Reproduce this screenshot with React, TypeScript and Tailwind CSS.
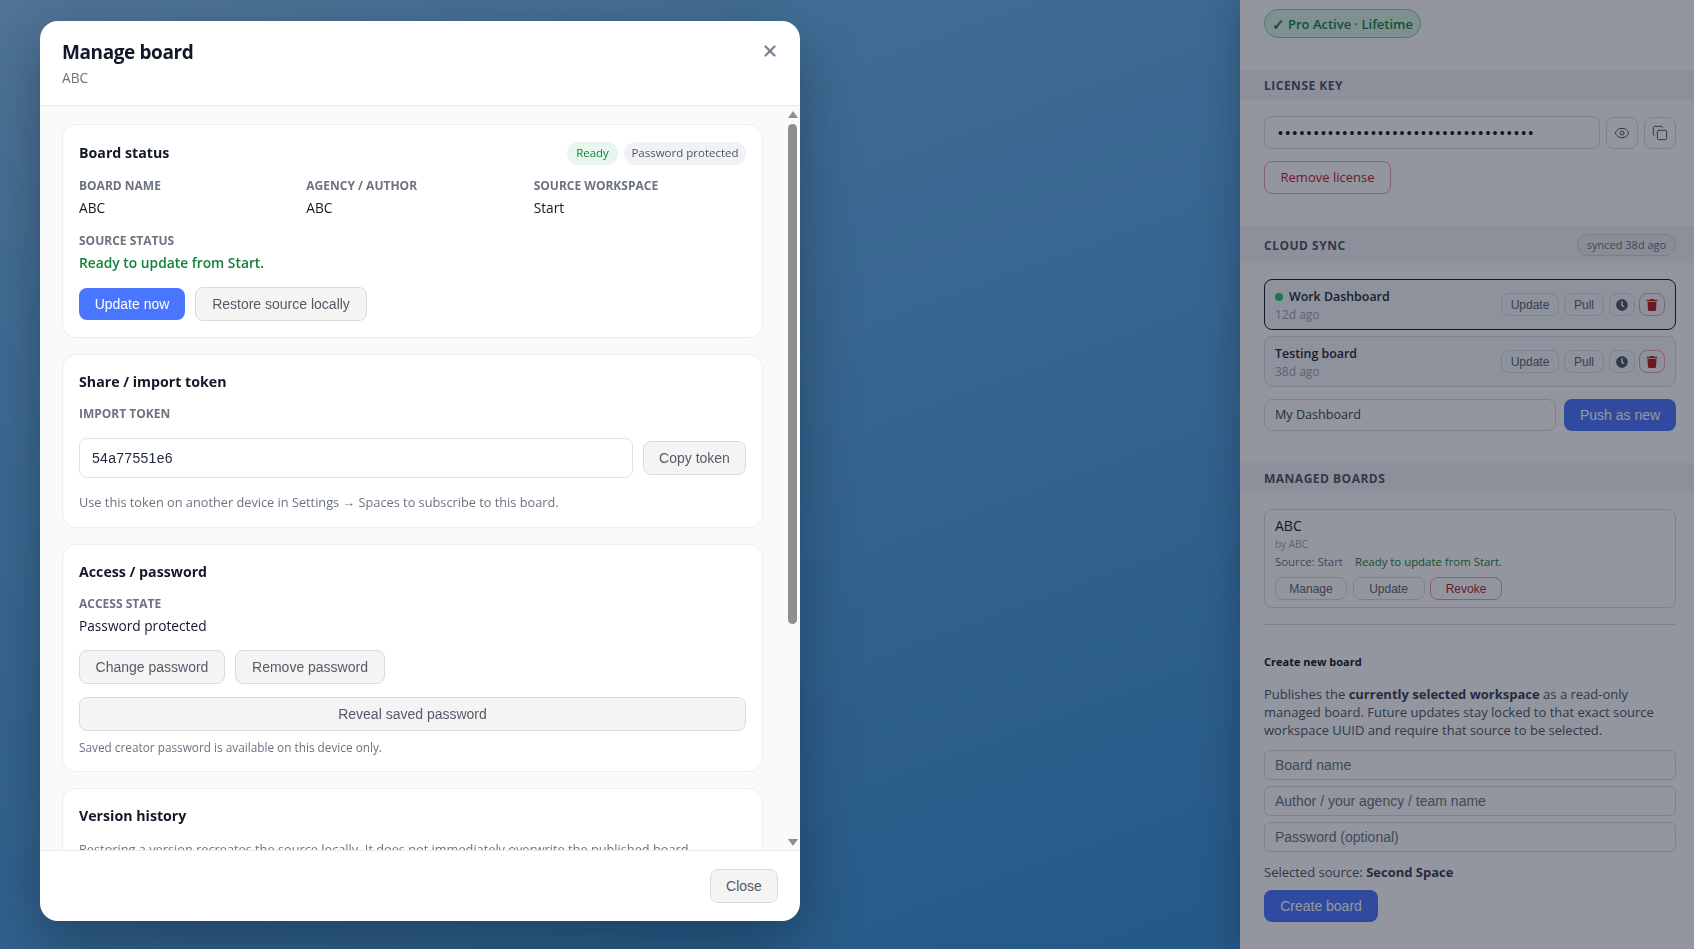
import { Copy, Eye, X } from 'lucide-react';
import { FaClock, FaTrash } from 'react-icons/fa';

const ui = "font-['Open_Sans','Noto_Sans',sans-serif]";
const btn =
  "inline-flex h-[34px] items-center justify-center rounded-lg border border-[#d9dbe0] bg-[#f4f4f5] font-['Liberation_Sans',sans-serif] text-sm whitespace-nowrap text-[#555b66]";
const miniBtn =
  "inline-flex h-[23px] items-center justify-center rounded-lg border border-[#d9dbe0] font-['Liberation_Sans',sans-serif] text-xs text-[#5b6472]";
const field =
  "h-[30px] w-full rounded-md border border-[#d9dbe0] bg-white px-[10px] font-['Liberation_Sans',sans-serif] text-sm leading-[28px] text-[#6b7280]";
const cardTitle = 'text-[14.2px] leading-6 font-bold text-[#111827]';
const value = 'text-[13.7px] leading-5 text-[#111827]';
const hint = 'text-[12.75px] leading-5 text-[#6b7280]';

function Label({ children }: { children: React.ReactNode }) {
  return <div className="text-xs leading-4 font-bold text-[#6b7280] uppercase">{children}</div>;
}

function Card({ className, children }: { className: string; children: React.ReactNode }) {
  return (
    <section className={`rounded-[14px] border border-[#eceef2] bg-white px-4 ${className}`}>{children}</section>
  );
}

function SectionBand({ title, right, className }: { title: string; right?: React.ReactNode; className: string }) {
  return (
    <div className={`flex items-center justify-between bg-[#f4f5f7] pr-[18px] pl-6 ${className}`}>
      <span className="pt-px text-xs font-bold tracking-[0.5px] text-[#4b5563] uppercase">{title}</span>
      {right}
    </div>
  );
}

function SyncRow({ name, ago, active }: { name: string; ago: string; active?: boolean }) {
  return (
    <div
      className={`flex h-[51px] items-center justify-between rounded-lg border bg-[#f6f7f9] pr-[10px] pl-[10px] ${
        active ? 'border-[#111827]' : 'border-[#d9dbe0]'
      }`}
    >
      <div className="pt-px">
        <div className="flex items-center gap-[6px] text-[12.4px] leading-[18px] font-semibold text-[#1f2937]">
          {active && <span className="size-2 rounded-full bg-[#22c55e]" />}
          {name}
        </div>
        <div className="pt-px text-xs leading-4 text-[#9ca3af]">{ago}</div>
      </div>
      <div className="flex items-center gap-[5px]">
        <button className={`${miniBtn} w-[58px]`}>Update</button>
        <button className={`${miniBtn} w-[40px]`}>Pull</button>
        <button className={`${miniBtn} -mr-px w-[26px]`}>
          <FaClock className="size-3 text-[#4b5563]" />
        </button>
        <button className={`${miniBtn} w-[26px] border-[#e8a3a8]`}>
          <FaTrash className="size-3 text-[#b91c1c]" />
        </button>
      </div>
    </div>
  );
}

function SidePanel() {
  return (
    <aside className={`ml-auto h-full w-[454px] overflow-hidden bg-white shadow-[-8px_0_32px_rgba(0,0,0,0.2)] ${ui}`}>
      <div className="pt-[9px] pl-6">
        <span className="inline-flex h-[29px] w-[157px] items-center justify-center gap-[3px] rounded-full border border-[#86c9a0] bg-[#dcf5e6] pt-[2px] text-[13px] font-semibold text-[#15803d]">
          <span className="text-[15px] leading-none">✓</span>
          <span>Pro Active · Lifetime</span>
        </span>
      </div>

      <SectionBand title="License key" className="mt-[32px] h-[30px]" />
      <div className="px-6 pt-4 pr-[18px]">
        <div className="flex items-center gap-[6px]">
          <div className="flex h-[33px] w-[336px] items-center rounded-lg border border-[#d9dbe0] pl-[13px] font-['Liberation_Sans',sans-serif] text-sm tracking-[2.25px] text-[#111827]">
            {'•'.repeat(36)}
          </div>
          <button className="flex size-8 items-center justify-center rounded-lg border border-[#d9dbe0] text-[#4b5563]">
            <Eye className="size-4" strokeWidth={1.5} />
          </button>
          <button className="flex size-8 items-center justify-center rounded-lg border border-[#d9dbe0] text-[#4b5563]">
            <Copy className="size-4" strokeWidth={1.5} />
          </button>
        </div>
        <button className="mt-3 h-[33px] w-[127px] rounded-lg border border-[#ef9ca3] text-[13px] text-[#b91c1c]">
          Remove license
        </button>
      </div>

      <SectionBand
        title="Cloud sync"
        className="mt-8 h-[37px] pt-px"
        right={
          <span className="flex h-[22px] w-[99px] items-center justify-center rounded-full border border-[#d1d5db] bg-[#eceef1] text-[11px] text-[#6b7280]">
            synced 38d ago
          </span>
        }
      />
      <div className="flex flex-col gap-[6px] pt-4 pr-[18px] pl-6">
        <SyncRow name="Work Dashboard" ago="12d ago" active />
        <SyncRow name="Testing board" ago="38d ago" />
        <div className="mt-[6px] flex gap-2">
          <div className="flex h-8 w-[292px] items-center rounded-lg border border-[#d9dbe0] pt-px pl-[10px] text-[12.6px] text-[#374151]">
            My Dashboard
          </div>
          <button className="h-8 w-[112px] rounded-lg bg-[#4a76ff] font-['Liberation_Sans',sans-serif] text-sm text-white">
            Push as new
          </button>
        </div>
      </div>

      <SectionBand title="Managed boards" className="mt-8 h-[30px]" />
      <div className="pt-4 pr-[18px] pl-6">
        <div className="h-[99px] rounded-lg border border-[#d9dbe0] pt-[6px] pl-[10px]">
          <div className="text-sm leading-5 font-medium text-[#111827]">ABC</div>
          <div className="text-[10px] leading-4 text-[#9ca3af]">by ABC</div>
          <div className="flex gap-3 pt-px text-[11.4px] leading-[17px]">
            <span className="text-[#6b7280]">Source: Start</span>
            <span className="text-[#15803d]">Ready to update from Start.</span>
          </div>
          <div className="mt-[7px] flex gap-[5.5px]">
            <button className={`${miniBtn} w-[72px] rounded-[9px]`}>Manage</button>
            <button className={`${miniBtn} w-[72px] rounded-[9px]`}>Update</button>
            <button className={`${miniBtn} w-[72px] rounded-[9px] border-[#ef9ca3] text-[#b91c1c]`}>Revoke</button>
          </div>
        </div>
        <div className="mt-4 h-px bg-[#d9dbe0]" />
        <h3 className="mt-[29px] text-[11px] leading-4 font-bold text-[#111827]">Create new board</h3>
        <p className="mt-[15px] w-[400px] text-[13px] leading-[18px] text-[#4b5563]">
          Publishes the <b className="font-bold text-[#374151]">currently selected workspace</b> as a read-only managed
          board. Future updates stay locked to that exact source workspace UUID and require that source to be selected.
        </p>
        <div className="mt-[11px] flex flex-col gap-[6px]">
          <div className={field}>Board name</div>
          <div className={field}>Author / your agency / team name</div>
          <div className={field}>Password (optional)</div>
        </div>
        <p className="mt-[11px] text-[13px] leading-[18px] text-[#4b5563]">
          Selected source: <b className="font-bold text-[#374151]">Second Space</b>
        </p>
        <button className="mt-[9px] h-8 w-[114px] rounded-lg bg-[#4a76ff] font-['Liberation_Sans',sans-serif] text-sm text-white">
          Create board
        </button>
      </div>
    </aside>
  );
}

function ManageBoardModal() {
  return (
    <div className={`absolute top-[21px] left-10 flex h-[900px] w-[760px] flex-col overflow-hidden rounded-[18px] bg-white shadow-[0_20px_60px_rgba(0,0,0,0.3)] ${ui}`}>
      <header className="relative h-[85px] shrink-0 border-b border-[#e8eaee] px-[22px] pt-[17px]">
        <h2 className="text-[19px] leading-7 font-bold tracking-[-0.4px] text-[#111827]">Manage board</h2>
        <p className="mt-[2px] text-[13.7px] leading-5 text-[#6b7280]">ABC</p>
        <X className="absolute top-[21px] right-[21px] size-[18px] text-[#7b8290]" strokeWidth={3} />
      </header>

      <div className="flex min-h-0 flex-1 bg-[#f9fafb]">
        <div className="flex min-w-0 flex-1 flex-col gap-4 overflow-hidden pt-[18px] pr-[22px] pl-[22px]">
          <Card className="h-[214px] shrink-0 pt-4">
            <div className="flex items-center justify-between">
              <h3 className={cardTitle}>Board status</h3>
              <div className="flex gap-[6px] text-[11.5px] font-medium">
                <span className="flex h-[23px] w-[51px] items-center justify-center rounded-full bg-[#e7f7ed] text-[#15803d]">
                  Ready
                </span>
                <span className="flex h-[23px] w-[122px] items-center justify-center rounded-full bg-[#f1f2f6] text-[#4b5563]">
                  Password protected
                </span>
              </div>
            </div>
            <div className="mt-[13px] grid grid-cols-3 gap-[15px]">
              <div>
                <Label>Board name</Label>
                <div className={`mt-[4px] ${value}`}>ABC</div>
              </div>
              <div>
                <Label>Agency / Author</Label>
                <div className={`mt-[4px] ${value}`}>ABC</div>
              </div>
              <div>
                <Label>Source workspace</Label>
                <div className={`mt-[4px] ${value}`}>Start</div>
              </div>
            </div>
            <div className="mt-[15px]">
              <Label>Source status</Label>
              <div className="mt-[4px] text-[13.8px] leading-5 font-semibold text-[#15803d]">Ready to update from Start.</div>
            </div>
            <div className="mt-[14px] flex items-center gap-[10px]">
              <button className="h-8 w-[106px] rounded-lg bg-[#4a76ff] font-['Liberation_Sans',sans-serif] text-sm text-white">
                Update now
              </button>
              <button className={`${btn} w-[172px]`}>Restore source locally</button>
            </div>
          </Card>

          <Card className="h-[174px] shrink-0 pt-[15px]">
            <h3 className={cardTitle}>Share / import token</h3>
            <div className="mt-[12px]">
              <Label>Import token</Label>
            </div>
            <div className="mt-[16px] flex items-center gap-[10px]">
              <div className="flex h-10 flex-1 items-center rounded-lg border border-[#dfe1e6] pl-3 font-['Liberation_Sans',sans-serif] text-sm tracking-[0.3px] text-[#1f2937]">
                54a77551e6
              </div>
              <button className={`${btn} w-[103px]`}>Copy token</button>
            </div>
            <p className={`mt-[14px] ${hint}`}>
              Use this token on another device in Settings → Spaces to subscribe to this board.
            </p>
          </Card>

          <Card className="h-[228px] shrink-0 pt-[15px]">
            <h3 className={cardTitle}>Access / password</h3>
            <div className="mt-[12px]">
              <Label>Access state</Label>
            </div>
            <div className={`mt-[4px] ${value}`}>Password protected</div>
            <div className="mt-[14px] flex gap-[10px]">
              <button className={`${btn} w-[146px]`}>Change password</button>
              <button className={`${btn} w-[150px]`}>Remove password</button>
            </div>
            <button className={`${btn} mt-[13px] w-full`}>Reveal saved password</button>
            <p className="mt-[8px] text-[11.8px] leading-4 text-[#6b7280]">Saved creator password is available on this device only.</p>
          </Card>

          <Card className="h-[120px] shrink-0 pt-[15px]">
            <h3 className={cardTitle}>Version history</h3>
            <p className={`mt-[11px] ${hint}`}>
              Restoring a version recreates the source locally. It does not immediately overwrite the published board.
            </p>
          </Card>
        </div>

        <div className="flex w-[15px] shrink-0 flex-col items-center bg-[#fafafa] pt-[5px] pb-[4px]">
          <svg width="10" height="7" viewBox="0 0 10 7" className="fill-[#8f8f8f]">
            <path d="M5 0 10 7H0z" />
          </svg>
          <div className="mt-[6px] h-[500px] w-[9px] rounded-full bg-[#8f8f8f]" />
          <svg width="10" height="7" viewBox="0 0 10 7" className="mt-auto fill-[#8f8f8f]">
            <path d="M5 7 10 0H0z" />
          </svg>
        </div>
      </div>

      <footer className="flex h-[71px] shrink-0 items-center justify-end border-t border-[#e8eaee] pr-[22px]">
        <button className={`${btn} w-[68px]`}>Close</button>
      </footer>
    </div>
  );
}

export default function App() {
  return (
    <div className="relative h-[949px] w-[1694px] overflow-hidden bg-linear-[160deg] from-[#85c2ef] via-[#66b2eb] via-23% to-[#2f8ad2]">
      <SidePanel />
      <div className="absolute inset-0 bg-[rgba(15,23,42,0.45)] backdrop-blur-[0.5px]" />
      <ManageBoardModal />
    </div>
  );
}
